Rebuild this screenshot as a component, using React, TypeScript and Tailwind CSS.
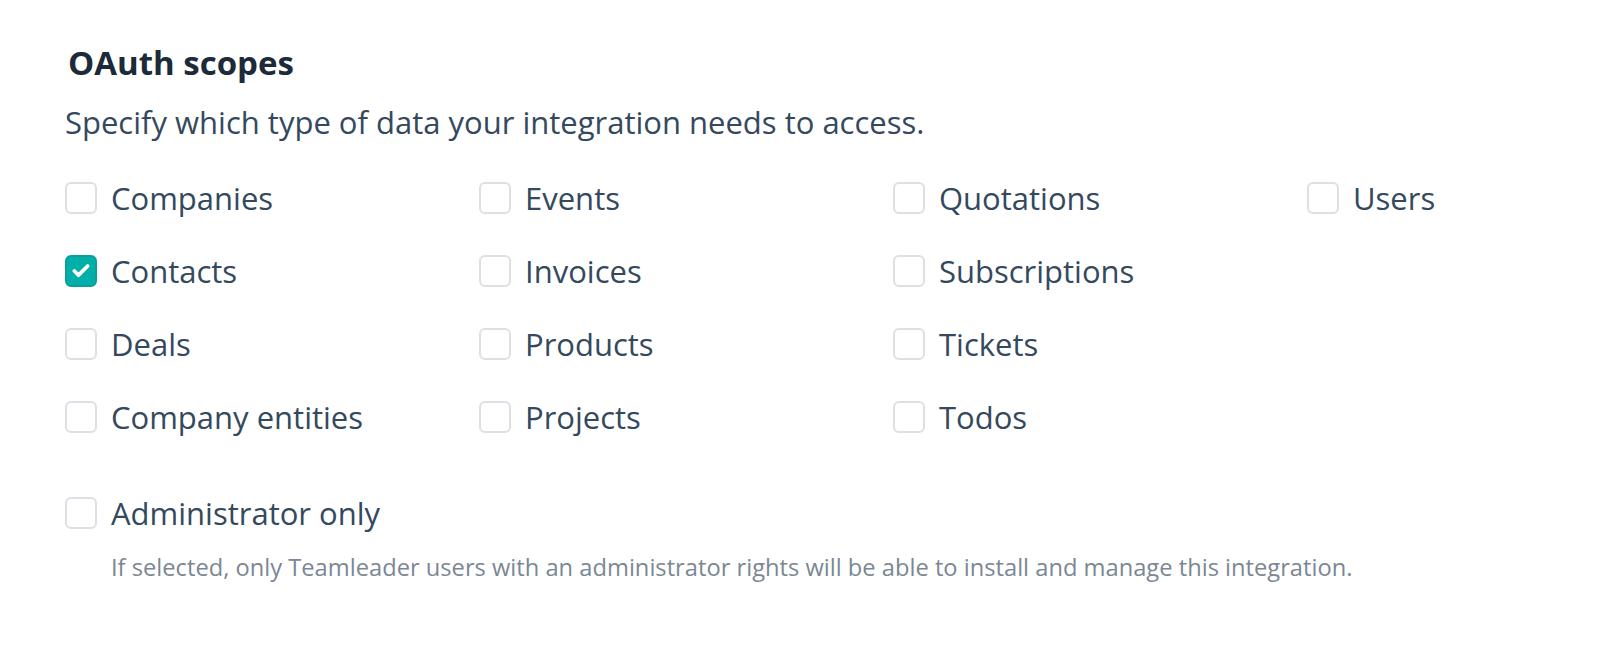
import { Check } from 'lucide-react';

const columns: { label: string; checked?: boolean }[][] = [
  [{ label: 'Companies' }, { label: 'Contacts', checked: true }, { label: 'Deals' }, { label: 'Company entities' }],
  [{ label: 'Events' }, { label: 'Invoices' }, { label: 'Products' }, { label: 'Projects' }],
  [{ label: 'Quotations' }, { label: 'Subscriptions' }, { label: 'Tickets' }, { label: 'Todos' }],
  [{ label: 'Users' }],
];

function Box({ checked }: { checked?: boolean }) {
  return checked ? (
    <span className="flex h-[32px] w-[32px] shrink-0 items-center justify-center rounded-[6px] border-2 border-[#0a9f98] bg-[#00b0a8]">
      <Check className="h-[20px] w-[20px] text-white" strokeWidth={4.5} />
    </span>
  ) : (
    <span className="block h-[32px] w-[32px] shrink-0 rounded-[6px] border-2 border-[#dcdfe3] bg-white" />
  );
}

function Option({ label, checked }: { label: string; checked?: boolean }) {
  return (
    <label className="flex h-[32px] items-center gap-[14px]">
      <Box checked={checked} />
      <span className="text-[31px] leading-[36px] text-[#34495e]">{label}</span>
    </label>
  );
}

export default function App() {
  return (
    <div className="h-[647px] overflow-hidden bg-white pl-[65px] pt-[45px] font-['Open_Sans',sans-serif]">
      <h2 className="ml-[3px] text-[33px] font-bold leading-[36px] text-[#1c2a3a]">OAuth scopes</h2>
      <p className="mt-[23px] text-[31px] leading-[36px] text-[#34495e]">
        Specify which type of data your integration needs to access.
      </p>

      <div className="mt-[42px] grid grid-cols-[414px_414px_414px_auto]">
        {columns.map((col, i) => (
          <div key={i} className="flex flex-col gap-[41px]">
            {col.map((o) => (
              <Option key={o.label} label={o.label} checked={o.checked} />
            ))}
          </div>
        ))}
      </div>

      <div className="mt-[64px]">
        <Option label="Administrator only" />
        <p className="mt-[24px] pl-[46px] text-[23.7px] leading-[28px] text-[#7b8794]">
          If selected, only Teamleader users with an administrator rights will be able to install and manage this integration.
        </p>
      </div>
    </div>
  );
}
